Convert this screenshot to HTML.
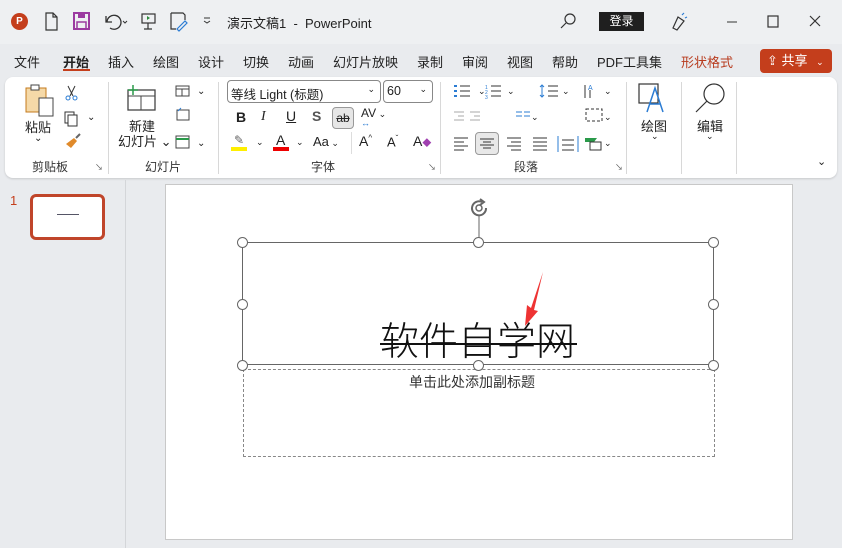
<!DOCTYPE html>
<html><head><meta charset="utf-8"><style>
*{margin:0;padding:0;box-sizing:border-box}
body{width:842px;height:548px;overflow:hidden;background:#e9ebee;font-family:"Liberation Sans","Noto Sans CJK SC",sans-serif;color:#222;position:relative;font-size:13px}
.a{position:absolute;white-space:nowrap}
.tab{position:absolute;top:52px;font-size:13px;color:#222}
.grp{position:absolute;top:158px;font-size:12px;color:#333}
.sep{position:absolute;top:82px;width:1px;height:92px;background:#d8d8d8}
.h{position:absolute;width:11px;height:11px;border:1.5px solid #666;border-radius:50%;background:#fff}
</style></head><body>
<div class="a" style="left:0;top:0;width:842px;height:44px;background:#eef0f2"></div>
<div class="a" style="left:11px;top:13px;width:17px;height:17px;border-radius:50%;background:#c43e1c;color:#fff;font-size:10px;font-weight:bold;text-align:center;line-height:17px">P</div>
<svg class="a" style="left:40px;top:10px" width="220" height="24">
<path d="M6 3h7l4 4v13H6z M13 3v4h4" fill="none" stroke="#333" stroke-width="1.2"/>
<rect x="34" y="3" width="15" height="16" fill="none" stroke="#9b3aa0" stroke-width="2"/><rect x="38" y="3" width="7" height="5" fill="#9b3aa0"/><rect x="37" y="12" width="9" height="7" fill="none" stroke="#9b3aa0" stroke-width="1.5"/>
<path d="M66 6v6h6 M67 12a7 7 0 1 1 3 6" fill="none" stroke="#333" stroke-width="1.3"/><path d="M83 11l2 2 2-2" fill="none" stroke="#333"/>
<rect x="102" y="4" width="13" height="9" fill="none" stroke="#333" stroke-width="1.2"/><path d="M108 13v6 M104 19h8" stroke="#333" stroke-width="1.2"/><path d="M107 6l3 2-3 2z" fill="#2a8a3a"/>
<path d="M131 3h12l2 2v5 M131 3v16h5" fill="none" stroke="#333" stroke-width="1.2"/><path d="M137 19l8-8 2 2-8 8z" fill="none" stroke="#2b7cd3" stroke-width="1.2"/>
<path d="M164 11l3 2 3-2" fill="none" stroke="#333"/><path d="M164 8h6" stroke="#333"/>
</svg>
<div class="a" style="left:227px;top:13px;font-size:13px">演示文稿1 &nbsp;- &nbsp;PowerPoint</div>
<svg class="a" style="left:558px;top:10px" width="280" height="24">
<circle cx="12" cy="9" r="5" fill="none" stroke="#333" stroke-width="1.2"/><path d="M8 13l-5 5" stroke="#333" stroke-width="1.2"/>
<path d="M115 18l5-11 6 4-7 9z" fill="none" stroke="#333" stroke-width="1.2"/><path d="M124 5l2-2 M127 8l2-1" stroke="#2b7cd3" stroke-width="1.2"/>
<path d="M169 12h10" stroke="#333"/><rect x="210" y="6" width="10" height="11" fill="none" stroke="#333" stroke-width="1.2"/>
<path d="M252 6l10 10 M262 6l-10 10" stroke="#333" stroke-width="1.2"/>
</svg>
<div class="a" style="left:599px;top:12px;width:45px;height:19px;background:#1f1f1f;color:#fff;font-size:12px;text-align:center;line-height:19px">登录</div>
<div class="tab" style="left:14px">文件</div>
<div class="tab" style="left:63px;font-weight:bold">开始</div>
<div class="a" style="left:63px;top:69px;width:27px;height:2px;background:#c43e1c"></div>
<div class="tab" style="left:108px">插入</div>
<div class="tab" style="left:153px">绘图</div>
<div class="tab" style="left:198px">设计</div>
<div class="tab" style="left:243px">切换</div>
<div class="tab" style="left:288px">动画</div>
<div class="tab" style="left:333px">幻灯片放映</div>
<div class="tab" style="left:417px">录制</div>
<div class="tab" style="left:462px">审阅</div>
<div class="tab" style="left:507px">视图</div>
<div class="tab" style="left:552px">帮助</div>
<div class="tab" style="left:597px">PDF工具集</div>
<div class="tab" style="left:681px;color:#b83b1e">形状格式</div>
<div class="a" style="left:760px;top:49px;width:72px;height:24px;background:#c43e1c;border-radius:4px;color:#fff;font-size:13px;line-height:24px;padding-left:7px">⇪ 共享 <span style="font-size:9px;margin-left:5px">⌄</span></div>
<div class="a" style="left:5px;top:77px;width:832px;height:101px;background:#fff;border-radius:8px;box-shadow:0 1px 2px rgba(0,0,0,.15)"></div>
<svg class="a" style="left:20px;top:82px" width="80" height="68">
<rect x="6" y="6" width="20" height="24" fill="#f5d9a8" stroke="#c47a1c"/><rect x="19" y="16" width="14" height="18" fill="#fff" stroke="#444"/><rect x="11" y="3" width="8" height="5" fill="#fff" stroke="#444"/>
<path d="M48 4l5 10 M55 4l-5 10" stroke="#333"/><circle cx="48" cy="16" r="2" fill="none" stroke="#2b7cd3"/><circle cx="55" cy="16" r="2" fill="none" stroke="#2b7cd3"/>
<rect x="45" y="30" width="9" height="11" fill="none" stroke="#333"/><rect x="48" y="33" width="9" height="11" fill="#fff" stroke="#333"/>
<path d="M46 62l8-6 3 3-6 7z" fill="#e08a2a"/><path d="M56 56l4-4" stroke="#666" stroke-width="2"/>
</svg>
<div class="a" style="left:25px;top:117px;font-size:13px">粘贴</div>
<div class="a" style="left:34px;top:133px;font-size:10px">⌄</div>
<div class="a" style="left:87px;top:112px;font-size:10px">⌄</div>
<div class="grp" style="left:32px">剪贴板</div>
<div class="a" style="left:95px;top:162px;font-size:8px;color:#555">↘</div>
<div class="sep" style="left:108px"></div>
<svg class="a" style="left:120px;top:82px" width="90" height="70">
<rect x="8" y="8" width="27" height="20" fill="none" stroke="#444" stroke-width="1.3"/><path d="M8 14h27 M21 14v14" stroke="#444"/><path d="M13 3v10 M8 8h10" stroke="#2a9a4a" stroke-width="1.5"/>
<rect x="56" y="4" width="13" height="10" fill="none" stroke="#444"/><path d="M56 7h13 M62 7v7" stroke="#444"/>
<rect x="57" y="28" width="12" height="10" fill="none" stroke="#444"/><path d="M58 29l3-3" stroke="#2b7cd3"/>
<rect x="56" y="54" width="13" height="12" fill="none" stroke="#444"/><path d="M56 57h13" stroke="#2a9a4a" stroke-width="2"/>
</svg>
<div class="a" style="left:129px;top:116px;font-size:13px">新建</div>
<div class="a" style="left:118px;top:131px;font-size:13px">幻灯片 ⌄</div>
<div class="a" style="left:197px;top:86px;font-size:10px">⌄</div>
<div class="a" style="left:197px;top:138px;font-size:10px">⌄</div>
<div class="grp" style="left:145px">幻灯片</div>
<div class="sep" style="left:218px"></div>
<div class="a" style="left:227px;top:80px;width:154px;height:23px;border:1px solid #888;border-radius:4px;font-size:12.5px;padding:3px 3px">等线 Light (标题)<span style="position:absolute;right:5px;font-size:9px">⌄</span></div>
<div class="a" style="left:383px;top:80px;width:50px;height:23px;border:1px solid #888;border-radius:4px;font-size:12.5px;padding:3px 3px">60<span style="position:absolute;right:5px;font-size:9px">⌄</span></div>
<div class="a" style="left:236px;top:109px;font-weight:bold;font-size:14px">B</div>
<div class="a" style="left:261px;top:109px;font-style:italic;font-size:14px;font-family:'Liberation Serif',serif">I</div>
<div class="a" style="left:286px;top:108px;text-decoration:underline;font-size:14px">U</div>
<div class="a" style="left:312px;top:108px;font-weight:bold;font-size:14px;color:#555">S</div>
<div class="a" style="left:332px;top:107px;width:22px;height:22px;border:1px solid #999;border-radius:4px;background:#e6e6e6;font-size:12px;text-align:center;line-height:20px;text-decoration:line-through">ab</div>
<div class="a" style="left:361px;top:106px;font-size:12px">AV<span style="font-size:9px"> ⌄</span></div>
<div class="a" style="left:361px;top:118px;font-size:9px;color:#2b7cd3">↔</div>
<div class="a" style="left:231px;top:147px;width:16px;height:4px;background:#ffef00"></div>
<div class="a" style="left:234px;top:133px;font-size:12px;color:#666">✎</div>
<div class="a" style="left:256px;top:137px;font-size:9px">⌄</div>
<div class="a" style="left:273px;top:147px;width:16px;height:4px;background:#e00"></div>
<div class="a" style="left:276px;top:132px;font-size:14px">A</div>
<div class="a" style="left:296px;top:137px;font-size:9px">⌄</div>
<div class="a" style="left:313px;top:134px;font-size:13px">Aa<span style="font-size:9px"> ⌄</span></div>
<div class="a" style="left:351px;top:132px;width:1px;height:22px;background:#ddd"></div>
<div class="a" style="left:359px;top:133px;font-size:14px">A<sup style="font-size:8px">^</sup></div>
<div class="a" style="left:387px;top:134px;font-size:13px">A<sup style="font-size:8px">ˇ</sup></div>
<div class="a" style="left:413px;top:133px;font-size:14px">A<span style="color:#a040b0;font-size:9px">◆</span></div>
<div class="grp" style="left:311px">字体</div>
<div class="a" style="left:428px;top:162px;font-size:8px;color:#555">↘</div>
<div class="sep" style="left:440px"></div>
<svg class="a" style="left:450px;top:82px" width="170" height="72">
<g stroke="#333"><path d="M10 4h10 M10 9h10 M10 14h10"/><path d="M41 4h10 M41 9h10 M41 14h10"/><path d="M98 4h10 M98 9h10 M98 14h10"/></g>
<g fill="#2b7cd3"><rect x="4" y="3" width="3" height="2"/><rect x="4" y="8" width="3" height="2"/><rect x="4" y="13" width="3" height="2"/></g>
<text x="35" y="7" font-size="5" fill="#2b7cd3">1</text><text x="35" y="12" font-size="5" fill="#2b7cd3">2</text><text x="35" y="17" font-size="5" fill="#2b7cd3">3</text>
<path d="M92 3v12" stroke="#2b7cd3"/><path d="M90 5l2-2 2 2 M90 13l2 2 2-2" fill="none" stroke="#2b7cd3"/>
<path d="M135 3v13 M140 8v8" stroke="#333"/><text x="138" y="8" font-size="7" fill="#2b7cd3">A</text>
<g stroke="#aaa"><path d="M4 30h10 M8 34h6 M4 38h10 M20 30h10 M24 34h6 M20 38h10"/></g>
<g stroke="#2b7cd3"><path d="M16 30h6 M16 34h6 M24 30h6 M24 34h6" transform="translate(50,0)"/></g>
<rect x="136" y="27" width="16" height="12" fill="none" stroke="#333" stroke-dasharray="3 2"/>
<g stroke="#333"><path d="M4 56h14 M4 60h10 M4 64h14 M4 68h10"/><path d="M30 56h14 M32 60h10 M30 64h14 M32 68h10"/><path d="M57 56h14 M61 60h10 M57 64h14 M61 68h10"/><path d="M83 56h14 M83 60h14 M83 64h14 M83 68h14"/><path d="M112 58h12 M112 63h12 M112 68h12"/></g>
<path d="M108 54v16 M128 54v16" stroke="#2b7cd3"/>
<path d="M135 56h12l-3 4h-9z" fill="#2a9a4a"/><rect x="140" y="60" width="11" height="8" fill="#fff" stroke="#333"/>
</svg>
<div class="a" style="left:475px;top:132px;width:24px;height:23px;border:1px solid #999;border-radius:4px;background:#e8e8e8"></div>
<svg class="a" style="left:480px;top:138px" width="14" height="12"><path d="M0 1h14 M3 4h8 M0 7h14 M3 10h8" stroke="#333"/></svg>
<div class="a" style="left:478px;top:86px;font-size:9px">⌄</div><div class="a" style="left:507px;top:86px;font-size:9px">⌄</div>
<div class="a" style="left:562px;top:86px;font-size:9px">⌄</div><div class="a" style="left:604px;top:86px;font-size:9px">⌄</div>
<div class="a" style="left:531px;top:112px;font-size:9px">⌄</div><div class="a" style="left:604px;top:112px;font-size:9px">⌄</div>
<div class="a" style="left:604px;top:138px;font-size:9px">⌄</div>
<div class="grp" style="left:514px">段落</div>
<div class="a" style="left:615px;top:162px;font-size:8px;color:#555">↘</div>
<div class="sep" style="left:626px"></div>
<svg class="a" style="left:637px;top:82px" width="140" height="32">
<rect x="2" y="2" width="19" height="19" fill="none" stroke="#333" stroke-width="1.2"/><path d="M10 30l8-24 8 24 M13 22h10" fill="none" stroke="#2b7cd3" stroke-width="1.5"/>
<circle cx="77" cy="12" r="10" fill="none" stroke="#333" stroke-width="1.2"/><path d="M70 19l-11 11" stroke="#333" stroke-width="1.2"/>
</svg>
<div class="a" style="left:641px;top:116px;font-size:13px">绘图</div>
<div class="a" style="left:651px;top:131px;font-size:9px">⌄</div>
<div class="sep" style="left:681px"></div>
<div class="a" style="left:697px;top:116px;font-size:13px">编辑</div>
<div class="a" style="left:706px;top:131px;font-size:9px">⌄</div>
<div class="sep" style="left:736px"></div>
<div class="a" style="left:817px;top:155px;font-size:11px">⌄</div>
<div class="a" style="left:125px;top:180px;width:1px;height:368px;background:#d4d6d9"></div>
<div class="a" style="left:10px;top:193px;color:#c43e1c;font-size:13px">1</div>
<div class="a" style="left:30px;top:194px;width:75px;height:46px;border:3px solid #c0452a;border-radius:6px;background:#fff"></div>
<div class="a" style="left:57px;top:214px;width:22px;height:1px;background:#556"></div>
<div class="a" style="left:165px;top:184px;width:628px;height:356px;background:#fff;border:1px solid #c8c8c8"></div>
<svg class="a" style="left:465px;top:196px" width="30" height="46"><path d="M21 12a7 7 0 1 1-4-6" fill="none" stroke="#666" stroke-width="2"/><path d="M15 3l4 3-4 3" fill="none" stroke="#666" stroke-width="2"/><circle cx="14" cy="12" r="3" fill="none" stroke="#666" stroke-width="1.5"/><path d="M14 19v27" stroke="#666"/></svg>
<div class="a" style="left:242px;top:242px;width:472px;height:123px;border:1px solid #666"></div>
<div class="a" style="left:243px;top:369px;width:472px;height:88px;border:1px dashed #888"></div>
<div class="a" style="left:380px;top:318px;font-size:39px;font-weight:300;line-height:50px;color:#111">软件自学网</div>
<div class="a" style="left:380px;top:343px;width:197px;height:2px;background:#111"></div>
<svg class="a" style="left:518px;top:270px" width="30" height="60"><path d="M25 2L16 40L20 41L7 56L9 35L13 38Z" fill="#ee3333"/></svg>
<div class="a" style="left:409px;top:372px;font-size:14px;color:#333">单击此处添加副标题</div>
<div class="h" style="left:237px;top:237px"></div><div class="h" style="left:473px;top:237px"></div><div class="h" style="left:708px;top:237px"></div>
<div class="h" style="left:237px;top:299px"></div><div class="h" style="left:708px;top:299px"></div>
<div class="h" style="left:237px;top:360px"></div><div class="h" style="left:473px;top:360px"></div><div class="h" style="left:708px;top:360px"></div>
</body></html>
